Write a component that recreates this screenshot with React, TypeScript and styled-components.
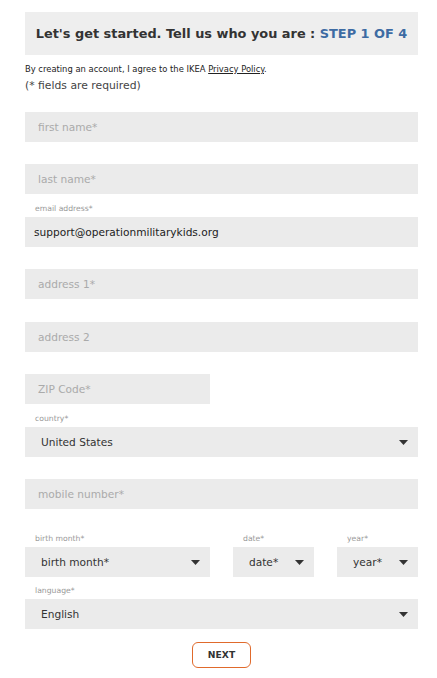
import { createGlobalStyle } from 'styled-components';
import styled from 'styled-components';

const GlobalStyle = createGlobalStyle`
    body {
        margin: 0;
        background: #fff;
        font-family: 'DejaVu Sans', Verdana, sans-serif;
    }
`;

interface FieldDef {
    name: string;
    placeholder: string;
    label?: string;
    value?: string;
    half?: boolean;
}

const textFields: FieldDef[] = [
    { name: 'firstName', placeholder: 'first name*' },
    { name: 'lastName', placeholder: 'last name*' },
    { name: 'email', placeholder: 'email address*', label: 'email address*', value: 'support@operationmilitarykids.org' },
    { name: 'address1', placeholder: 'address 1*' },
    { name: 'address2', placeholder: 'address 2' },
    { name: 'zip', placeholder: 'ZIP Code*', half: true },
];

function Arrow() {
    return (
        <ArrowIcon width='9' height='5' viewBox='0 0 9 5'>
            <path d='M0 0 L9 0 L4.5 5 Z' fill='#333' />
        </ArrowIcon>
    );
}

function Select({ label, value, options }: { label: string; value: string; options: string[] }) {
    return (
        <Field>
            <Label>{label}</Label>
            <SelectWrap>
                <StyledSelect defaultValue={value}>
                    {options.map((o) => <option key={o}>{o}</option>)}
                </StyledSelect>
                <Arrow />
            </SelectWrap>
        </Field>
    );
}

export default function App() {
    return (
        <Page>
            <GlobalStyle />
            <Header>
                Let's get started. Tell us who you are : <Step>STEP 1 OF 4</Step>
            </Header>
            <Disclaimer>
                By creating an account, I agree to the IKEA <a href='#'>Privacy Policy</a>.
            </Disclaimer>
            <Required>(* fields are required)</Required>

            <Form>
                {textFields.map((f) => (
                    <Field key={f.name} $half={f.half}>
                        <Label>{f.label}</Label>
                        <Input name={f.name} placeholder={f.placeholder} defaultValue={f.value} />
                    </Field>
                ))}

                <Select label='country*' value='United States' options={['United States', 'Canada']} />

                <Field>
                    <Label />
                    <Input name='mobile' placeholder='mobile number*' />
                </Field>

                <BirthRow>
                    <Select label='birth month*' value='birth month*' options={['birth month*', 'January']} />
                    <Select label='date*' value='date*' options={['date*', '1']} />
                    <Select label='year*' value='year*' options={['year*', '2000']} />
                </BirthRow>

                <Select label='language*' value='English' options={['English', 'Español']} />

                <ButtonRow>
                    <NextButton type='button'>NEXT</NextButton>
                </ButtonRow>
            </Form>
        </Page>
    );
}

const Page = styled.div`
    width: 393px;
    margin: 0 25px;
    padding-top: 12px;
`;

const Header = styled.h1`
    margin: 0;
    height: 43px;
    display: flex;
    align-items: center;
    justify-content: center;
    background: #eeeeee;
    color: #333;
    font-size: 12.9px;
    font-weight: bold;
    white-space: pre;
`;

const Step = styled.span`
    color: #3d6ba3;
`;

const Disclaimer = styled.p`
    margin: 8px 0 0;
    font-size: 8.4px;
    line-height: 12px;
    color: #222;

    a {
        color: #222;
    }
`;

const Required = styled.p`
    margin: 3px 0 0;
    font-size: 10.8px;
    line-height: 16px;
    color: #444;
`;

const Form = styled.form`
    display: flex;
    flex-direction: column;
    gap: 6.5px;
    padding-top: 1.5px;
`;

const Field = styled.div<{ $half?: boolean }>`
    display: flex;
    flex-direction: column;
    width: ${(p) => (p.$half ? '185px' : '100%')};
`;

const Label = styled.label`
    display: block;
    height: 16px;
    line-height: 16px;
    padding-left: 10px;
    font-size: 7.7px;
    color: #999;
`;

const Input = styled.input`
    box-sizing: border-box;
    height: 30px;
    width: 100%;
    border: none;
    outline: none;
    background: #ebebeb;
    padding: 0 9px;
    font-family: inherit;
    font-size: 10.6px;
    color: #222;

    &:placeholder-shown {
        padding-left: 13px;
    }

    &::placeholder {
        color: #aaa;
    }
`;

const SelectWrap = styled.div`
    position: relative;
    height: 30px;
`;

const StyledSelect = styled.select`
    appearance: none;
    box-sizing: border-box;
    width: 100%;
    height: 30px;
    border: none;
    border-radius: 0;
    outline: none;
    background: #ebebeb;
    padding: 0 24px 0 16px;
    font-family: inherit;
    font-size: 10.6px;
    color: #333;
`;

const ArrowIcon = styled.svg`
    position: absolute;
    right: 10px;
    top: 13px;
    pointer-events: none;
`;

const BirthRow = styled.div`
    display: grid;
    grid-template-columns: 185px 81px 81px;
    justify-content: space-between;
    margin-top: 15px;
`;

const ButtonRow = styled.div`
    display: flex;
    justify-content: center;
    margin-top: 6px;
`;

const NextButton = styled.button`
    width: 59px;
    height: 26px;
    background: #fff;
    border: 1px solid #e06a2c;
    border-radius: 6px;
    font-family: inherit;
    font-size: 9.2px;
    font-weight: bold;
    color: #333;
    cursor: pointer;
`;
